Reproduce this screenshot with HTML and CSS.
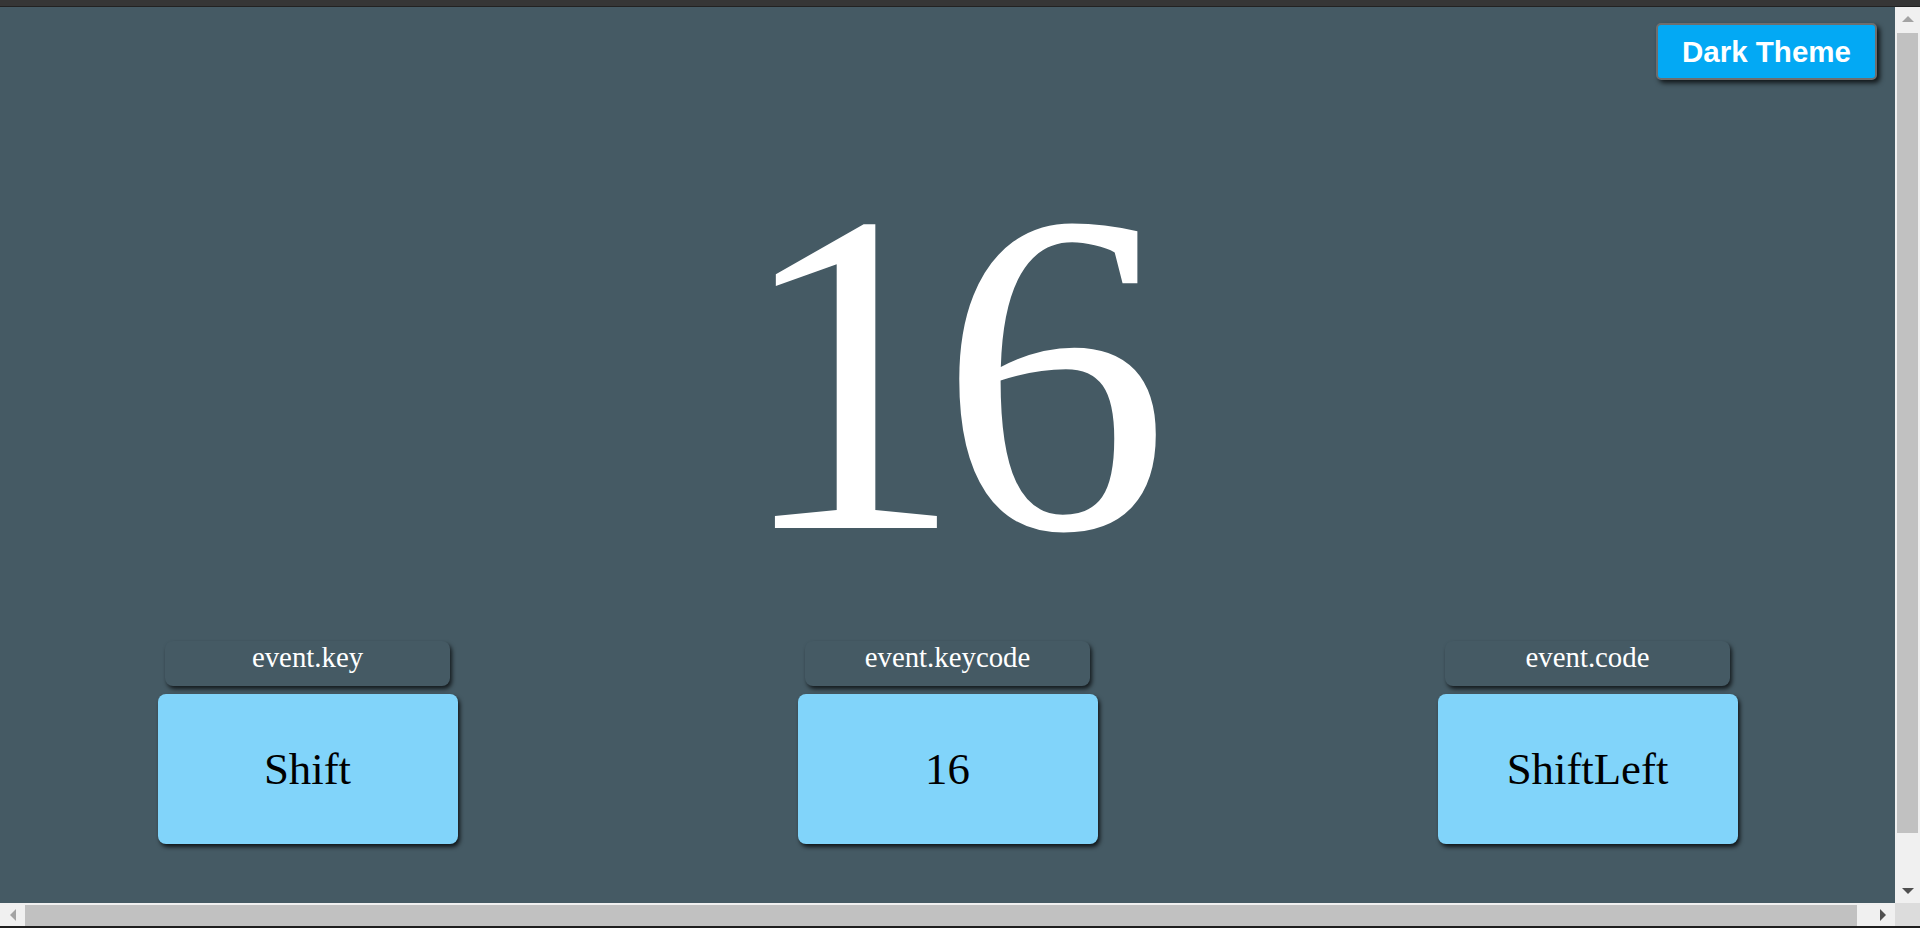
FILE: index.html
```html
<!DOCTYPE html>
<html lang="en">
<head>
<meta charset="utf-8">
<title>Keycode</title>
<link rel="stylesheet" href="styles.css">
</head>
<body>
<div class="window">
  <div class="topbar"></div>
  <div class="frame">
    <main class="page">
      <header class="toolbar">
        <button class="theme-btn" type="button">Dark Theme</button>
      </header>
      <div class="keycode">16</div>
      <section class="cards">
        <div class="card">
          <div class="card-label">event.key</div>
          <div class="card-value">Shift</div>
        </div>
        <div class="card">
          <div class="card-label">event.keycode</div>
          <div class="card-value">16</div>
        </div>
        <div class="card">
          <div class="card-label">event.code</div>
          <div class="card-value">ShiftLeft</div>
        </div>
      </section>
    </main>
    <div class="vscroll">
      <div class="sb-btn"><span class="tri tri-up"></span></div>
      <div class="vtrack"><div class="vthumb"></div></div>
      <div class="sb-btn"><span class="tri tri-down"></span></div>
    </div>
  </div>
  <div class="hbar">
    <div class="hscroll">
      <div class="sb-btn-h"><span class="tri tri-left"></span></div>
      <div class="htrack"><div class="hthumb"></div></div>
      <div class="sb-btn-h"><span class="tri tri-right"></span></div>
    </div>
    <div class="corner"></div>
  </div>
  <div class="bottomline"></div>
</div>
</body>
</html>
```

FILE: styles.css
```css
* { box-sizing: border-box; }

html, body {
  margin: 0;
  padding: 0;
  height: 100%;
  overflow: hidden;
}

.window {
  width: 1920px;
  height: 928px;
  display: flex;
  flex-direction: column;
}

.topbar {
  height: 7px;
  background: #363636;
  border-bottom: 1px solid #222;
}

.frame {
  flex: 1;
  display: flex;
  min-height: 0;
}

.page {
  flex: 1;
  background: #455a64;
  display: flex;
  flex-direction: column;
  overflow: hidden;
}

.toolbar {
  display: flex;
  justify-content: flex-end;
  padding: 16px 18px 0 0;
}

.theme-btn {
  width: 221px;
  height: 57px;
  background: #03a9f4;
  color: #fff;
  border: 2px solid #6e6e6e;
  border-radius: 5px;
  box-shadow: 3px 3px 5px rgba(0, 0, 0, 0.75);
  font-family: "Liberation Sans", Arial, sans-serif;
  font-weight: bold;
  font-size: 29.5px;
  padding: 0;
  line-height: 1;
}

.keycode {
  margin-top: 63px;
  height: 460px;
  padding-right: 16px;
  font-family: "Liberation Serif", "Times New Roman", serif;
  font-size: 460px;
  letter-spacing: -25px;
  line-height: 1;
  color: #fff;
  text-align: center;
}

.cards {
  margin-top: 38px;
  display: flex;
  justify-content: center;
  gap: 340px;
}

.card {
  width: 300px;
  display: flex;
  flex-direction: column;
  align-items: center;
  gap: 8px;
  font-family: "Liberation Serif", "Times New Roman", serif;
}

.card-label {
  width: 285px;
  height: 45px;
  background: #455a64;
  border-radius: 8px;
  box-shadow: 2px 3px 4px rgba(0, 0, 0, 0.7);
  color: #fff;
  font-size: 28.8px;
  line-height: normal;
  text-align: center;
}

.card-value {
  width: 300px;
  height: 150px;
  background: #81d4fa;
  border-radius: 8px;
  box-shadow: 2px 3px 4px rgba(0, 0, 0, 0.75);
  color: #000;
  font-size: 44.8px;
  display: flex;
  align-items: center;
  justify-content: center;
}

/* scrollbars */
.vscroll {
  width: 25px;
  background: #f0f0f0;
  display: flex;
  flex-direction: column;
}

.sb-btn {
  height: 24px;
  display: flex;
  align-items: center;
  justify-content: center;
}

.vtrack {
  flex: 1;
  padding: 2px 2px 0 2px;
}

.vthumb {
  height: 800px;
  background: #c1c1c1;
}

.hbar {
  height: 23px;
  display: flex;
}

.hscroll {
  flex: 1;
  display: flex;
  background: #f0f0f0;
}

.sb-btn-h {
  width: 25px;
  display: flex;
  align-items: center;
  justify-content: center;
}

.htrack {
  flex: 1;
  padding: 2px 0 0 0;
}

.hthumb {
  width: 1832px;
  height: 100%;
  background: #c1c1c1;
}

.corner {
  width: 25px;
  background: #dcdcdc;
}

.bottomline {
  height: 2px;
  background: #1e1e1e;
}

.tri {
  width: 0;
  height: 0;
  display: block;
}

.tri-up {
  border-left: 6px solid transparent;
  border-right: 6px solid transparent;
  border-bottom: 6px solid #a3a3a3;
}

.tri-down {
  border-left: 6px solid transparent;
  border-right: 6px solid transparent;
  border-top: 6px solid #505050;
}

.tri-left {
  border-top: 6px solid transparent;
  border-bottom: 6px solid transparent;
  border-right: 6px solid #a3a3a3;
}

.tri-right {
  border-top: 6px solid transparent;
  border-bottom: 6px solid transparent;
  border-left: 6px solid #505050;
}
```
